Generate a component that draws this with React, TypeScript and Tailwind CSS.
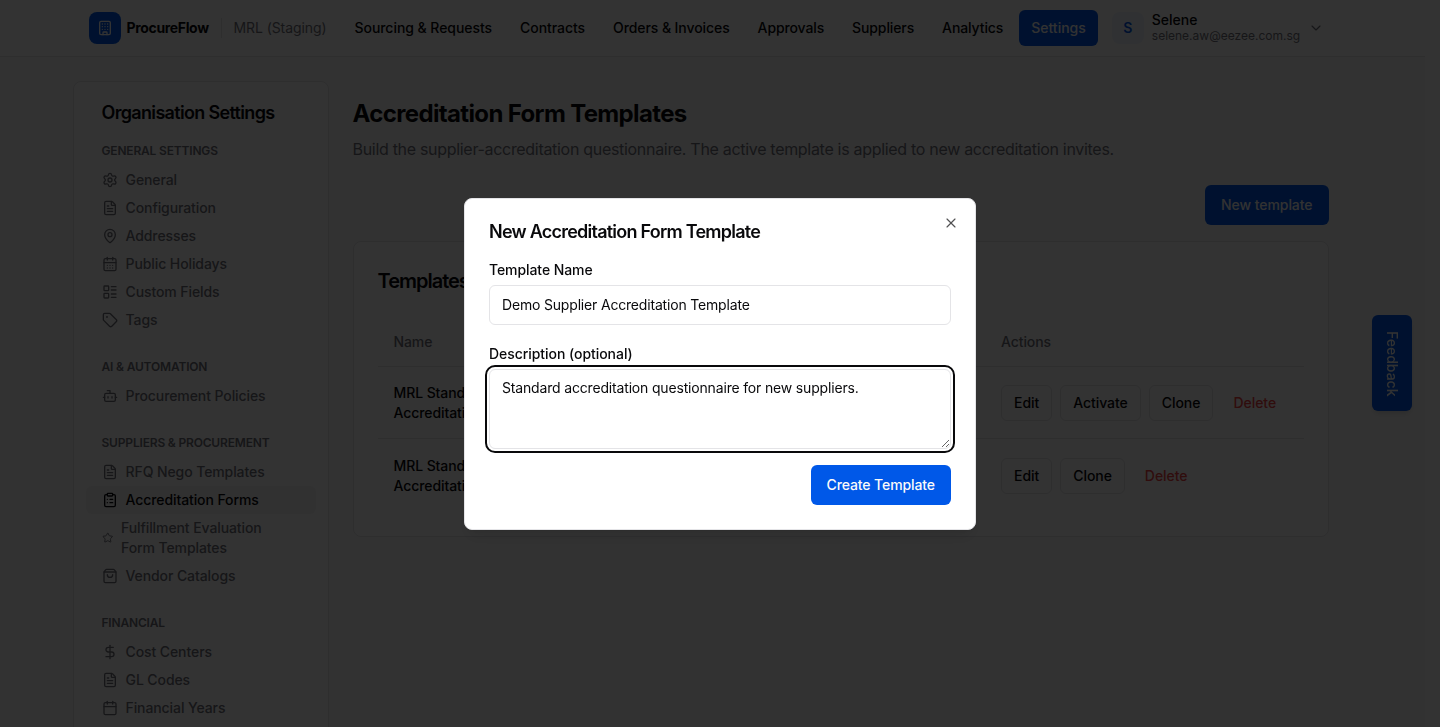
import type { ReactNode } from "react";
import {
  Bot,
  Building,
  Calendar,
  CalendarDays,
  ChevronDown,
  ClipboardList,
  DollarSign,
  FileText,
  LayoutList,
  MapPin,
  Settings,
  ShoppingBag,
  Star,
  Tag,
  X,
  type LucideIcon,
} from "lucide-react";

const navItems = [
  { label: "Sourcing & Requests", tracking: "tracking-[-0.05px]" },
  { label: "Contracts", tracking: "tracking-[-0.06px]" },
  { label: "Orders & Invoices", tracking: "tracking-[-0.08px]" },
  { label: "Approvals", tracking: "tracking-[-0.12px]" },
  { label: "Suppliers", tracking: "tracking-[-0.11px]" },
  { label: "Analytics", tracking: "tracking-[-0.11px]" },
  { label: "Settings", tracking: "tracking-[0px]", active: true },
];

type Item = { label: string; icon: LucideIcon; active?: boolean };

const sections: { title: string; items: Item[] }[] = [
  {
    title: "GENERAL SETTINGS",
    items: [
      { label: "General", icon: Settings },
      { label: "Configuration", icon: FileText },
      { label: "Addresses", icon: MapPin },
      { label: "Public Holidays", icon: CalendarDays },
      { label: "Custom Fields", icon: LayoutList },
      { label: "Tags", icon: Tag },
    ],
  },
  {
    title: "AI & AUTOMATION",
    items: [{ label: "Procurement Policies", icon: Bot }],
  },
  {
    title: "SUPPLIERS & PROCUREMENT",
    items: [
      { label: "RFQ Nego Templates", icon: FileText },
      { label: "Accreditation Forms", icon: ClipboardList, active: true },
      { label: "Fulfillment Evaluation Form Templates", icon: Star },
      { label: "Vendor Catalogs", icon: ShoppingBag },
    ],
  },
  {
    title: "FINANCIAL",
    items: [
      { label: "Cost Centers", icon: DollarSign },
      { label: "GL Codes", icon: FileText },
      { label: "Financial Years", icon: Calendar },
    ],
  },
];

function Header() {
  return (
    <header className="h-[57px] border-b border-[#e4e4e7] bg-white">
      <div className="mx-auto flex h-14 w-[1280px] items-center px-4">
        <div className="flex size-8 shrink-0 items-center justify-center rounded-lg bg-[#0058e8] text-white">
          <Building className="size-4" />
        </div>
        <span className="ml-1.5 w-[83px] shrink-0 whitespace-nowrap text-sm font-bold tracking-[-0.34px]">
          ProcureFlow
        </span>
        <div className="ml-[11px] h-5 w-px shrink-0 bg-[#e4e4e7]" />
        <span className="ml-3 w-[92px] shrink-0 whitespace-nowrap text-sm tracking-[-0.08px] text-[#71717a]">
          MRL (Staging)
        </span>
        <nav className="ml-[17px] flex items-center gap-1">
          {navItems.map((item) => (
            <a
              key={item.label}
              className={`flex h-9 items-center whitespace-nowrap rounded-md px-3 text-sm font-medium ${item.tracking} ${
                item.active ? "bg-[#0058e8] text-[#fafafa]" : ""
              }`}
            >
              {item.label}
            </a>
          ))}
        </nav>
        <div className="ml-[14px] flex items-center">
          <div className="flex size-8 items-center justify-center rounded-lg bg-[#eef4ff] text-sm font-semibold text-[#0058e8]">
            S
          </div>
          <div className="mb-0.5 ml-2 flex flex-col">
            <span className="text-sm font-medium leading-[17px]">Selene</span>
            <span className="text-xs leading-[15px] text-[#71717a]">selene.aw@eezee.com.sg</span>
          </div>
          <ChevronDown className="ml-2 size-4 text-[#71717a]" strokeWidth={1.75} />
        </div>
      </div>
    </header>
  );
}

function Sidebar() {
  return (
    <aside className="h-[1000px] w-64 shrink-0 rounded-lg border border-[#e4e4e7] bg-white px-3 pt-[17px]">
      <h2 className="mb-4 px-4 text-lg font-semibold leading-7 tracking-[-0.67px]">Organisation Settings</h2>
      <div className="flex flex-col gap-[25px]">
        {sections.map((section) => (
          <section key={section.title}>
            <h3 className="mb-[7px] px-4 text-xs font-semibold tracking-[-0.18px] text-[#71717a]">{section.title}</h3>
            <ul>
              {section.items.map(({ label, icon: Icon, active }) => (
                <li
                  key={label}
                  className={
                    active
                      ? "flex items-center gap-2 rounded-md bg-[#f4f4f5] px-4 py-1 text-sm font-medium tracking-[-0.09px] text-[#09090b]"
                      : "flex items-center gap-2 rounded-md px-4 py-1 text-sm font-medium tracking-[-0.09px] text-[#71717a]"
                  }
                >
                  <Icon className={Icon === Star ? "size-[11.5px] shrink-0" : "size-4 shrink-0"} />
                  <span className="max-w-40">{label}</span>
                </li>
              ))}
            </ul>
          </section>
        ))}
      </div>
    </aside>
  );
}

function OutlineButton({ children }: { children: ReactNode }) {
  return (
    <button className="h-9 rounded-md border border-[#e4e4e7] bg-white px-3 text-sm font-medium tracking-[-0.05px]">
      {children}
    </button>
  );
}

function TemplateRow({ name, actions, last }: { name: string; actions: string[]; last?: boolean }) {
  return (
    <div className={last ? "flex h-[73px] items-center" : "flex h-[72px] items-center border-b border-[#e4e4e7] pt-px"}>
      <div className="w-[232px] px-4 text-sm font-medium tracking-[-0.09px]">{name}</div>
      <div className="ml-auto flex w-[318.5px] items-center gap-2 px-4">
        {actions.map((action) => (
          <OutlineButton key={action}>{action}</OutlineButton>
        ))}
        <button className="h-9 px-3 text-sm font-medium tracking-[-0.05px] text-[#ef4444]">Delete</button>
      </div>
    </div>
  );
}

function Content() {
  return (
    <main className="flex min-w-0 flex-1 flex-col px-6 pt-[17px]">
      <h1 className="text-2xl font-bold leading-8 tracking-[-0.64px]">Accreditation Form Templates</h1>
      <p className="mt-[7px] text-base tracking-[-0.305px] text-[#71717a]">
        Build the supplier-accreditation questionnaire. The active template is applied to new accreditation invites.
      </p>
      <button className="mt-6 h-10 self-end rounded-md bg-[#0058e8] px-4 text-sm font-medium tracking-[-0.06px] text-[#fafafa]">
        New template
      </button>
      <section className="mt-4 h-[296px] rounded-lg border border-[#e4e4e7] bg-white px-6 pt-[23px]">
        <h2 className="text-xl font-semibold leading-8 tracking-[-1px]">Templates</h2>
        <div className="mt-[21px]">
          <div className="flex h-[49px] items-center border-b border-[#e4e4e7] text-sm font-medium tracking-[-0.09px] text-[#71717a]">
            <div className="w-[232px] px-4">Name</div>
            <div className="ml-auto w-[318.5px] px-4">Actions</div>
          </div>
          <TemplateRow name="MRL Standard Supplier Accreditation" actions={["Edit", "Activate", "Clone"]} />
          <TemplateRow name="MRL Standard Supplier Accreditation" actions={["Edit", "Clone"]} last />
        </div>
      </section>
    </main>
  );
}

function TemplateDialog() {
  return (
    <div className="fixed inset-0 z-20 flex items-center justify-center bg-black/80">
      <div
        role="dialog"
        className="relative flex w-[512px] flex-col gap-4 rounded-lg border border-[#e4e4e7] bg-white p-6 shadow-lg"
      >
        <h2 className="text-lg font-semibold leading-[18px] tracking-[-0.76px]">New Accreditation Form Template</h2>
        <div>
          <label htmlFor="name" className="block pt-0.5 text-sm font-medium leading-[22px] tracking-[-0.08px]">
            Template Name
          </label>
          <input
            id="name"
            defaultValue="Demo Supplier Accreditation Template"
            className="mt-1 block h-10 w-full rounded-md border border-[#e4e4e7] bg-white px-3 text-sm tracking-[-0.18px] outline-none"
          />
        </div>
        <div>
          <label htmlFor="description" className="block pt-0.5 text-sm font-medium leading-[22px] tracking-[-0.05px]">
            Description (optional)
          </label>
          <textarea
            id="description"
            defaultValue="Standard accreditation questionnaire for new suppliers."
            className="mt-1 block h-20 w-full rounded-md border border-[#e4e4e7] bg-white px-3 py-2 text-sm tracking-[-0.17px] outline-2 outline-offset-2 outline-[#09090b]"
          />
        </div>
        <button className="h-10 self-end rounded-md bg-[#0058e8] px-4 text-sm font-medium tracking-[-0.1px] text-[#fafafa]">
          Create Template
        </button>
        <button aria-label="Close" className="absolute right-4 top-4 opacity-70">
          <X className="size-4" strokeWidth={1.75} />
        </button>
      </div>
    </div>
  );
}

export default function App() {
  return (
    <div className="h-[727px] overflow-hidden bg-white font-[Inter,sans-serif] text-[#09090b] antialiased">
      <div className="flex h-full">
        <div className="w-[1425px] shrink-0 bg-[#fafafa]">
          <Header />
          <div className="mx-auto flex w-[1280px] pt-6">
            <Sidebar />
            <Content />
          </div>
        </div>
      </div>
      <button className="fixed right-7 top-[315px] z-10 flex h-24 w-10 items-center justify-center rounded-md bg-[#0058e8] pt-px text-sm font-medium text-[#fafafa] shadow-md">
        <span className="[writing-mode:vertical-rl]">Feedback</span>
      </button>
      <TemplateDialog />
    </div>
  );
}
